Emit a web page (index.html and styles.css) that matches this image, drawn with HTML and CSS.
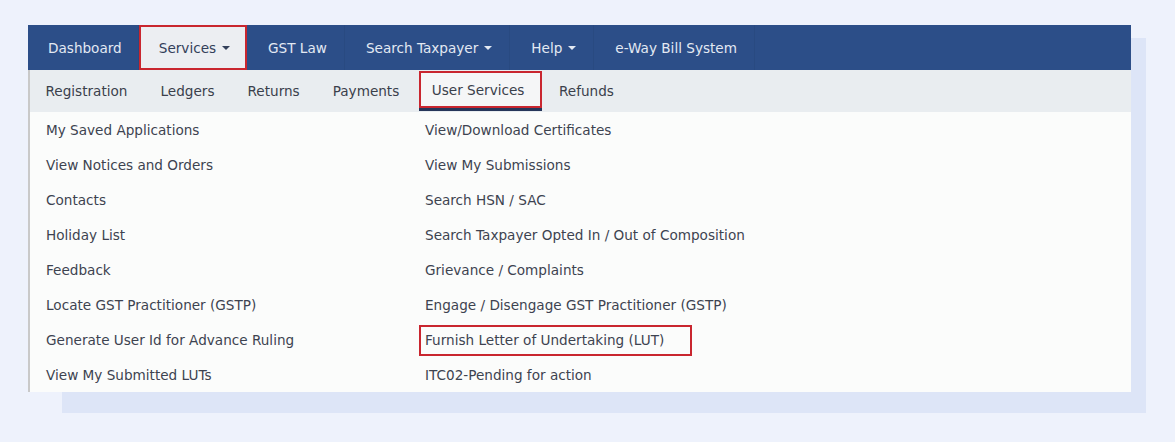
FILE: index.html
```html
<!DOCTYPE html>
<html>
<head>
<meta charset="utf-8">
<link rel="stylesheet" href="styles.css">
</head>
<body>
<div class="stage">
  <div class="card">
    <nav class="topnav">
      <a class="top-item first">Dashboard</a>
      <a class="top-item active">Services <span class="caret"></span></a>
      <a class="top-item">GST Law</a>
      <a class="top-item">Search Taxpayer <span class="caret"></span></a>
      <a class="top-item">Help <span class="caret"></span></a>
      <a class="top-item">e-Way Bill System</a>
    </nav>
    <div class="subnav">
      <a class="sub-item">Registration</a>
      <a class="sub-item">Ledgers</a>
      <a class="sub-item">Returns</a>
      <a class="sub-item">Payments</a>
      <a class="sub-item active">User Services</a>
      <a class="sub-item">Refunds</a>
    </div>
    <div class="menu">
      <div class="col">
        <a class="row">My Saved Applications</a>
        <a class="row">View Notices and Orders</a>
        <a class="row">Contacts</a>
        <a class="row">Holiday List</a>
        <a class="row">Feedback</a>
        <a class="row">Locate GST Practitioner (GSTP)</a>
        <a class="row">Generate User Id for Advance Ruling</a>
        <a class="row">View My Submitted LUTs</a>
      </div>
      <div class="col">
        <a class="row">View/Download Certificates</a>
        <a class="row">View My Submissions</a>
        <a class="row">Search HSN / SAC</a>
        <a class="row">Search Taxpayer Opted In / Out of Composition</a>
        <a class="row">Grievance / Complaints</a>
        <a class="row">Engage / Disengage GST Practitioner (GSTP)</a>
        <a class="row"><span class="highlight">Furnish Letter of Undertaking (LUT)</span></a>
        <a class="row">ITC02-Pending for action</a>
      </div>
    </div>
  </div>
</div>
</body>
</html>
```

FILE: styles.css
```css
html {
  margin: 0;
  padding: 0;
  background: #eef2fc;
}
body {
  margin: 0;
  padding: 0;
  font-family: "DejaVu Sans", Verdana, sans-serif;
  font-size: 13.6px;
}
.stage {
  padding: 25px 0 50px 28px;
}
.card {
  position: relative;
  z-index: 0;
  width: 1103px;
}
.card::before {
  content: "";
  position: absolute;
  left: 34px;
  top: 13px;
  right: -15px;
  bottom: -21px;
  background: #dde5f7;
  z-index: -1;
}
.topnav {
  display: flex;
  height: 45px;
  background: #2c4e88;
}
.top-item {
  display: flex;
  align-items: center;
  padding: 0 17px 0 21px;
  color: #e3e9f3;
  border-right: 1px solid #294a81;
  white-space: nowrap;
}
.top-item.first {
  padding: 0 16px 0 20px;
}
.top-item.active {
  background: #eceef2;
  color: #33405a;
  border: 2px solid #c9262f;
  padding: 0 15px 0 18px;
}
.caret {
  display: inline-block;
  width: 0;
  height: 0;
  margin-left: 6px;
  border-left: 4px solid transparent;
  border-right: 4px solid transparent;
  border-top: 4px solid currentColor;
}
.subnav {
  display: flex;
  height: 42px;
  background: #e9edf0;
  border-left: 2px solid #c9c9c9;
}
.sub-item {
  display: flex;
  align-items: center;
  padding: 0 16.5px;
  color: #3a404b;
  white-space: nowrap;
}
.sub-item:first-child {
  padding-left: 15.5px;
}
.sub-item.active {
  height: 37px;
  margin: 1px 0 0 3px;
  padding: 1px 16px 0 11px;
  border: 2px solid #c9262f;
  background: #f5f6f7;
  box-shadow: 0 3px 0 #26365a;
  box-sizing: border-box;
}
.menu {
  display: grid;
  grid-template-columns: 379px 1fr;
  background: #fbfcfb;
  border-left: 2px solid #c9c9c9;
  padding-left: 16px;
}
.col {
  display: flex;
  flex-direction: column;
}
.row {
  display: flex;
  align-items: center;
  height: 35px;
  color: #3d4350;
  white-space: nowrap;
}
.highlight {
  border: 2px solid #c9262f;
  padding: 5px 26px 6px 4px;
  margin-left: -6px;
  margin-top: 1px;
}
```
